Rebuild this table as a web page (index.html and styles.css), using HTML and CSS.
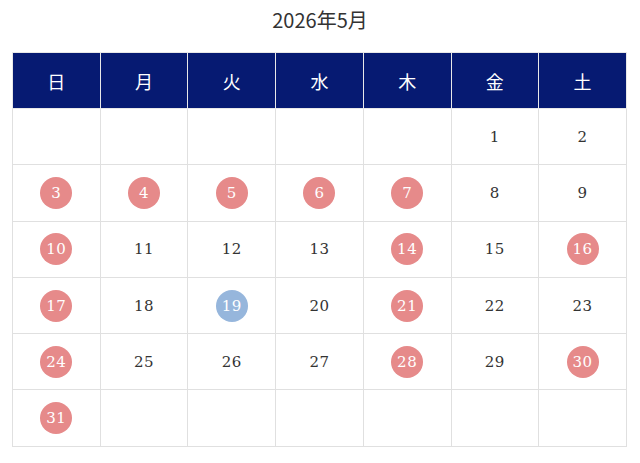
FILE: index.html
```html
<!DOCTYPE html>
<html lang="ja">
<head>
<meta charset="utf-8">
<link rel="stylesheet" href="styles.css">
</head>
<body>
<div class="cal">
  <div class="title">2026年5月</div>
  <table class="grid">
    <thead>
      <tr><th>日</th><th>月</th><th>火</th><th>水</th><th>木</th><th>金</th><th>土</th></tr>
    </thead>
    <tbody>
      <tr><td></td><td></td><td></td><td></td><td></td><td><span class="d">1</span></td><td><span class="d">2</span></td></tr>
      <tr><td><span class="d off">3</span></td><td><span class="d off">4</span></td><td><span class="d off">5</span></td><td><span class="d off">6</span></td><td><span class="d off">7</span></td><td><span class="d">8</span></td><td><span class="d">9</span></td></tr>
      <tr><td><span class="d off">10</span></td><td><span class="d">11</span></td><td><span class="d">12</span></td><td><span class="d">13</span></td><td><span class="d off">14</span></td><td><span class="d">15</span></td><td><span class="d off">16</span></td></tr>
      <tr><td><span class="d off">17</span></td><td><span class="d">18</span></td><td><span class="d today">19</span></td><td><span class="d">20</span></td><td><span class="d off">21</span></td><td><span class="d">22</span></td><td><span class="d">23</span></td></tr>
      <tr><td><span class="d off">24</span></td><td><span class="d">25</span></td><td><span class="d">26</span></td><td><span class="d">27</span></td><td><span class="d off">28</span></td><td><span class="d">29</span></td><td><span class="d off">30</span></td></tr>
      <tr><td><span class="d off">31</span></td><td></td><td></td><td></td><td></td><td></td><td></td></tr>
    </tbody>
  </table>
</div>
</body>
</html>
```
FILE: styles.css
```css
html, body {
  margin: 0;
  padding: 0;
  background: #ffffff;
}
.cal {
  padding: 0 12px;
}
.title {
  height: 40px;
  line-height: 40px;
  margin-bottom: 12px;
  text-align: center;
  font-family: "Noto Sans CJK JP", "Noto Sans", sans-serif;
  font-size: 20px;
  color: #333;
}
.grid {
  width: 615px;
  border-collapse: collapse;
  table-layout: fixed;
}
.grid th, .grid td {
  border: 1px solid #e0e0e0;
  height: 55.3px;
  padding: 0;
  text-align: center;
  vertical-align: middle;
}
.grid th {
  height: 55px;
  background: #061a72;
  color: #ffffff;
  font-family: "Noto Sans CJK JP", sans-serif;
  font-weight: normal;
  font-size: 18px;
  border-color: #e8e8e8;
}
.d {
  display: inline-flex;
  align-items: center;
  justify-content: center;
  width: 32px;
  height: 32px;
  border-radius: 50%;
  font-family: "DejaVu Serif", "Liberation Serif", serif;
  font-size: 15px;
  letter-spacing: 0.5px;
  color: #333;
}
.d.off {
  background: #e68a8a;
  color: #fff;
}
.d.today {
  background: #96b6dc;
  color: #fff;
}
```
